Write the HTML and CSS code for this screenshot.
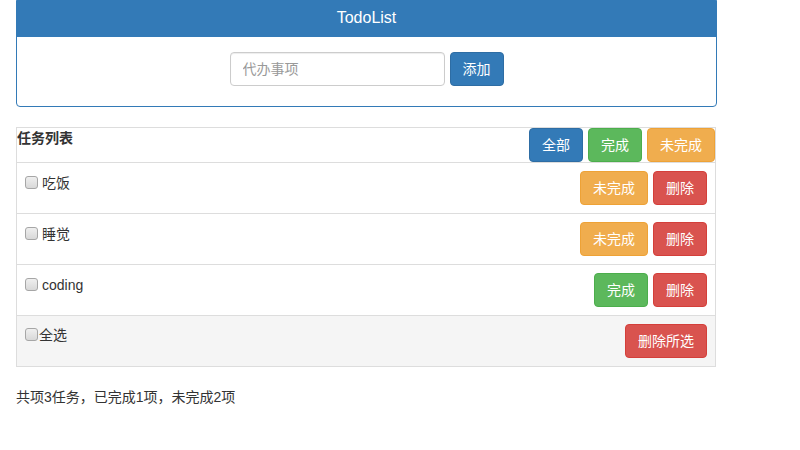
FILE: index.html
```html
<!DOCTYPE html>
<html lang="zh-CN">
<head>
<meta charset="utf-8">
<title>TodoList</title>
<link rel="stylesheet" href="styles.css">
</head>
<body>
<div class="page">
  <section class="panel">
    <header class="panel-heading">
      <h3 class="panel-title">TodoList</h3>
    </header>
    <div class="panel-body">
      <form class="add-form">
        <input class="form-control" type="text" placeholder="代办事项">
        <button type="button" class="btn btn-primary">添加</button>
      </form>
    </div>
  </section>

  <div class="task-table">
    <div class="task-head">
      <span class="head-title">任务列表</span>
      <div class="btn-row">
        <button type="button" class="btn btn-primary">全部</button>
        <button type="button" class="btn btn-success">完成</button>
        <button type="button" class="btn btn-warning">未完成</button>
      </div>
    </div>
    <div class="task-row">
      <label class="task-label"><input type="checkbox" class="chk"><span class="task-text">吃饭</span></label>
      <div class="btn-row">
        <button type="button" class="btn btn-warning">未完成</button>
        <button type="button" class="btn btn-danger">删除</button>
      </div>
    </div>
    <div class="task-row">
      <label class="task-label"><input type="checkbox" class="chk"><span class="task-text">睡觉</span></label>
      <div class="btn-row">
        <button type="button" class="btn btn-warning">未完成</button>
        <button type="button" class="btn btn-danger">删除</button>
      </div>
    </div>
    <div class="task-row">
      <label class="task-label"><input type="checkbox" class="chk"><span class="task-text">coding</span></label>
      <div class="btn-row">
        <button type="button" class="btn btn-success">完成</button>
        <button type="button" class="btn btn-danger">删除</button>
      </div>
    </div>
    <div class="task-row task-foot">
      <label class="task-label foot-label"><input type="checkbox" class="chk"><span class="task-text">全选</span></label>
      <div class="btn-row">
        <button type="button" class="btn btn-danger">删除所选</button>
      </div>
    </div>
  </div>

  <p class="summary">共项3任务，已完成1项，未完成2项</p>
</div>
</body>
</html>
```

FILE: styles.css
```css
html, body {
  margin: 0;
  padding: 0;
  background: #fff;
}

body {
  font-family: "Liberation Sans", "Noto Sans CJK SC", sans-serif;
  font-size: 14px;
  line-height: 20px;
  color: #333;
}

.page {
  padding-left: 16px;
  width: 701px;
}

/* ---------- panel ---------- */
.panel {
  margin-top: -3px;
  margin-bottom: 20px;
  border: 1px solid #337ab7;
  border-radius: 4px;
  background: #fff;
}

.panel-heading {
  background: #337ab7;
  color: #fff;
  padding: 11px 15px 9px;
  border-bottom: 1px solid #337ab7;
  border-radius: 3px 3px 0 0;
  text-align: center;
}

.panel-title {
  margin: 0;
  font-size: 16px;
  line-height: 18px;
  font-weight: normal;
}

.panel-body {
  padding: 15px 15px 20px;
}

.add-form {
  display: flex;
  justify-content: center;
  gap: 5px;
  margin: 0;
}

.form-control {
  box-sizing: border-box;
  width: 215px;
  height: 34px;
  padding: 6px 12px;
  font-family: inherit;
  font-size: 14px;
  line-height: 20px;
  color: #555;
  border: 1px solid #ccc;
  border-radius: 4px;
  box-shadow: inset 0 1px 1px rgba(0, 0, 0, 0.075);
  outline: none;
}

.form-control::placeholder {
  color: #999;
}

/* ---------- buttons ---------- */
.btn {
  display: inline-block;
  box-sizing: border-box;
  height: 34px;
  padding: 6px 12px;
  margin: 0;
  font-family: inherit;
  font-size: 14px;
  line-height: 20px;
  color: #fff;
  border: 1px solid transparent;
  border-radius: 4px;
  cursor: pointer;
  white-space: nowrap;
}

.btn-primary { background: #337ab7; border-color: #2e6da4; }
.btn-success { background: #5cb85c; border-color: #4cae4c; }
.btn-warning { background: #f0ad4e; border-color: #eea236; }
.btn-danger  { background: #d9534f; border-color: #d43f3a; }

.btn-row {
  display: flex;
  gap: 5px;
}

/* ---------- task table ---------- */
.task-table {
  box-sizing: border-box;
  width: 700px;
  border: 1px solid #ddd;
  margin-bottom: 20px;
}

.task-head {
  display: flex;
  justify-content: space-between;
  align-items: flex-start;
  border-bottom: 1px solid #ddd;
}

.head-title {
  font-weight: bold;
}

.task-row {
  display: flex;
  justify-content: space-between;
  align-items: flex-start;
  padding: 8px;
  border-bottom: 1px solid #ddd;
}

.task-foot {
  background: #f5f5f5;
  border-bottom: 0;
}

.task-label {
  display: flex;
  align-items: flex-start;
}

.chk {
  appearance: none;
  -webkit-appearance: none;
  box-sizing: border-box;
  width: 13px;
  height: 13px;
  margin: 5px 4px 0 0;
  border: 1px solid #a6a6a6;
  border-radius: 3px;
  background: linear-gradient(#efefef, #d8d8d8);
}

.task-text {
  margin-top: 2px;
}

.foot-label .chk {
  margin: 4px 1px 0 0;
}

.foot-label .task-text {
  margin-top: 1px;
}

.summary {
  margin: 0 0 10px;
}
```
